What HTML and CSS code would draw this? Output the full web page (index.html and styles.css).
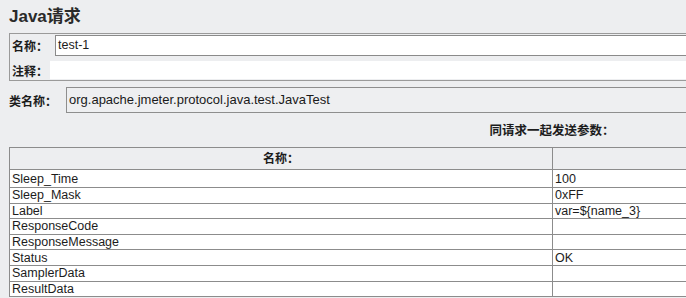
FILE: index.html
```html
<!DOCTYPE html>
<html lang="zh">
<head>
<meta charset="utf-8">
<title>Java请求</title>
<link rel="stylesheet" href="styles.css">
</head>
<body>
<div class="page">
  <div class="title">Java请求</div>
  <div class="box">
    <div class="row row-name">
      <label class="lbl lbl-name">名称：</label>
      <div class="field field-name">test-1</div>
    </div>
    <div class="row row-comment">
      <label class="lbl lbl-comment">注释：</label>
      <div class="field field-comment"></div>
    </div>
  </div>
  <div class="classrow">
    <label class="lbl lbl-class">类名称：</label>
    <div class="field field-class">org.apache.jmeter.protocol.java.test.JavaTest</div>
  </div>
  <div class="params-title">同请求一起发送参数：</div>
  <div class="grid">
    <div class="cell head">名称：</div>
    <div class="cell head"></div>
    <div class="cell">Sleep_Time</div><div class="cell">100</div>
    <div class="cell">Sleep_Mask</div><div class="cell">0xFF</div>
    <div class="cell">Label</div><div class="cell">var=${name_3}</div>
    <div class="cell">ResponseCode</div><div class="cell"></div>
    <div class="cell">ResponseMessage</div><div class="cell"></div>
    <div class="cell">Status</div><div class="cell">OK</div>
    <div class="cell">SamplerData</div><div class="cell"></div>
    <div class="cell">ResultData</div><div class="cell"></div>
  </div>
</div>
</body>
</html>
```

FILE: styles.css
```css
html, body {
  margin: 0;
  padding: 0;
  overflow: hidden;
  background: #edeef0;
}
body {
  font-family: "Liberation Sans", "Noto Sans CJK SC", sans-serif;
  color: #1c1c1c;
}
.page {
  padding-left: 9px;
  width: 1086px;
}
.title {
  height: 33px;
  line-height: 33px;
  font-size: 17px;
  font-weight: bold;
  color: #2a2a2a;
}
.box {
  height: 46px;
  border: 1px solid #9a9a9a;
  border-right: none;
  display: flex;
  flex-direction: column;
}
.row {
  display: flex;
  align-items: center;
}
.lbl {
  font-size: 12px;
  font-weight: bold;
  padding-left: 2px;
  box-sizing: border-box;
  flex: none;
}
.row-name {
  height: 22px;
  padding-top: 1px;
  box-sizing: border-box;
}
.lbl-name { width: 45px; }
.field-name {
  flex: 1;
  height: 21px;
  box-sizing: border-box;
  background: #fff;
  border: 1px solid #8a8a8a;
  border-right: none;
  font-size: 12.5px;
  line-height: 19px;
  padding-left: 2px;
}
.row-comment {
  height: 24px;
  padding: 5px 0 1px;
  box-sizing: border-box;
}
.lbl-comment { width: 40px; }
.field-comment {
  flex: 1;
  height: 18px;
  background: #fff;
}
.classrow {
  display: flex;
  align-items: center;
  margin-top: 6px;
}
.lbl-class { width: 57px; padding-left: 0; }
.field-class {
  flex: 1;
  height: 26px;
  box-sizing: border-box;
  border: 1px solid #8e8e8e;
  border-right: none;
  background: #eeeff1;
  font-size: 13px;
  line-height: 24px;
  padding-left: 2px;
  color: #1a1a1a;
}
.params-title {
  padding: 10px 0 8px;
  line-height: 16px;
  font-size: 12.5px;
  font-weight: bold;
  text-align: center;
}
.grid {
  display: grid;
  grid-template-columns: 543px 1fr;
  grid-template-rows: 22px 18px repeat(7, 15.6px);
  border-top: 1px solid #8c8c8c;
  border-left: 1px solid #8c8c8c;
  background: #fff;
}
.cell {
  border-right: 1px solid #8c8c8c;
  border-bottom: 1px solid #8c8c8c;
  font-size: 12.5px;
  line-height: 14px;
  padding-left: 2px;
  display: flex;
  align-items: center;
  overflow: hidden;
  white-space: nowrap;
}
.cell.head {
  background: #edeef0;
  justify-content: center;
  font-size: 12px;
  font-weight: bold;
  padding-left: 0;
}
```
